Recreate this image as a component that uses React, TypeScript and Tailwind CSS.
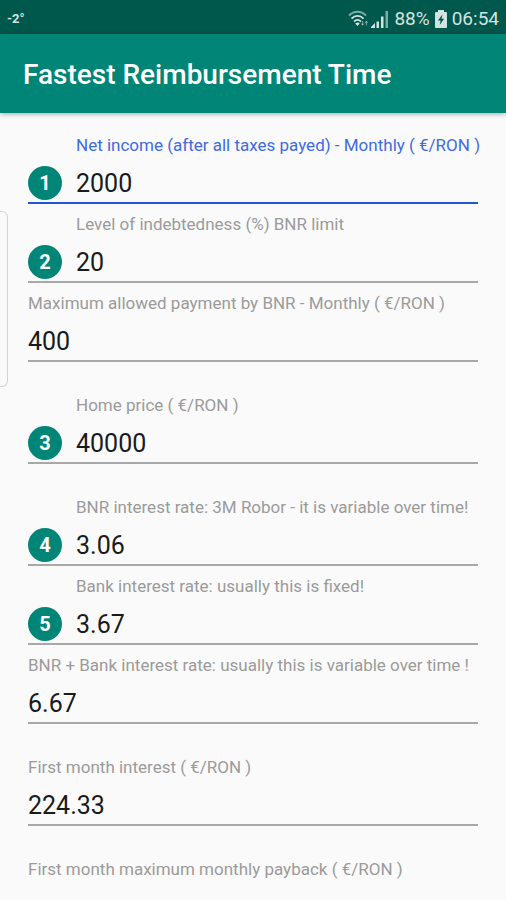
import { useState } from 'react';

interface Field {
    id: string;
    label: string;
    value: string;
    step?: number;
    computed?: boolean;
    spaced?: boolean;
}

const FIELDS: Field[] = [
    { id: 'income', label: 'Net income (after all taxes payed) - Monthly ( €/RON )', value: '2000', step: 1 },
    { id: 'debt', label: 'Level of indebtedness (%) BNR limit', value: '20', step: 2 },
    { id: 'max', label: 'Maximum allowed payment by BNR - Monthly ( €/RON )', value: '400', computed: true },
    { id: 'price', label: 'Home price ( €/RON )', value: '40000', step: 3, spaced: true },
    { id: 'robor', label: 'BNR interest rate: 3M Robor - it is variable over time!', value: '3.06', step: 4, spaced: true },
    { id: 'bank', label: 'Bank interest rate: usually this is fixed!', value: '3.67', step: 5 },
    { id: 'total', label: 'BNR + Bank interest rate: usually this is variable over time !', value: '6.67', computed: true },
    { id: 'interest', label: 'First month interest ( €/RON )', value: '224.33', computed: true, spaced: true },
    { id: 'payback', label: 'First month maximum monthly payback ( €/RON )', value: '', computed: true, spaced: true },
];

const WifiIcon = () => (
    <svg width="22" height="18" viewBox="0 0 22 18" fill="none" stroke="currentColor" strokeWidth="1.8" aria-hidden="true">
        <path d="M1 5.5C6 .5 13 .5 18 5.5" opacity=".6" />
        <path d="M3.5 8.6c3.6-3.6 8.4-3.6 12 0" />
        <path d="M6 11.6c2.2-2.2 4.8-2.2 7 0" />
        <path d="M7.2 13.6c1.4-1.4 3.2-1.4 4.6 0L9.5 16z" fill="currentColor" stroke="none" />
        <path d="M14.6 11v4m-1.2-1.3 1.2 1.5 1.2-1.5M18.4 15.5v-4m-1.2 1.3 1.2-1.5 1.2 1.5" strokeWidth="1" opacity=".6" />
    </svg>
);

const SignalIcon = () => (
    <svg width="18" height="18" viewBox="0 0 18 18" fill="currentColor" aria-hidden="true">
        <path d="M0 18v-1l4-4v5z" />
        <path d="M5.5 11.5H8V18H5.5z" />
        <path d="M10 6.5h2.5V18H10z" />
        <path d="M14.5 1H17v17h-2.5z" opacity=".6" />
    </svg>
);

const BatteryIcon = () => (
    <svg width="12" height="18" viewBox="0 0 12 18" aria-hidden="true">
        <path d="M3 0h6v2h2a1 1 0 0 1 1 1v14a1 1 0 0 1-1 1H1a1 1 0 0 1-1-1V3a1 1 0 0 1 1-1h2z" fill="currentColor" />
        <path d="M7.4 4.5 3 10.4h2.6l-.9 4.6 4.4-6.3H6.6z" fill="#00574b" />
    </svg>
);

export default function App() {
    const [values, setValues] = useState<Record<string, string>>(
        Object.fromEntries(FIELDS.map(f => [f.id, f.value]))
    );
    const [active, setActive] = useState('income');

    return (
        <div className="relative flex h-screen flex-col overflow-hidden bg-[#fafafa] font-['Roboto',sans-serif]">
            <div className="flex h-[34px] shrink-0 items-center justify-between bg-[#00574b] px-[7px] pt-1 text-[#d3e3e0]">
                <span className="text-[13px] font-bold">-2°</span>
                <div className="flex items-center gap-[5px] text-[19px] leading-5">
                    <div className="flex items-center gap-px">
                        <WifiIcon />
                        <SignalIcon />
                    </div>
                    <span>88%</span>
                    <BatteryIcon />
                    <span>06:54</span>
                </div>
            </div>

            <header className="z-10 flex h-[79px] shrink-0 items-center bg-[#008577] px-[23px] pt-[2px] shadow-[0_1px_5px_rgba(0,0,0,0.35)]">
                <h1 className="text-[28px] leading-8 font-medium whitespace-nowrap text-white">Fastest Reimbursement Time</h1>
            </header>

            <main className="min-h-0 flex-1 overflow-y-auto px-7 pt-3 [scrollbar-width:none]">
                {FIELDS.map(f => (
                    <div key={f.id} className={f.spaced ? 'mt-[23px] pt-[10px]' : 'pt-[10px]'}>
                        <label
                            htmlFor={f.id}
                            className={`block text-[17px] leading-5 whitespace-nowrap ${f.step ? 'pl-12' : ''} ${active === f.id ? 'text-[#3f6be0]' : 'text-[#9b9b9b]'}`}
                        >
                            {f.label}
                        </label>
                        <div className={`flex h-[49px] items-center border-b-2 pt-2 ${active === f.id ? 'border-[#1f55d8]' : 'border-[#a8a8a8]'}`}>
                            {f.step && (
                                <span className="mr-[14px] flex size-[34px] shrink-0 items-center justify-center rounded-full bg-[#008577] text-xl font-bold text-white">
                                    {f.step}
                                </span>
                            )}
                            <input
                                id={f.id}
                                inputMode="decimal"
                                value={values[f.id]}
                                readOnly={f.computed}
                                onFocus={() => setActive(f.id)}
                                onChange={e => setValues({ ...values, [f.id]: e.target.value })}
                                className="min-w-0 flex-1 bg-transparent pt-[2px] text-[25px] leading-8 text-[#1a1a1a] outline-none"
                            />
                        </div>
                    </div>
                ))}
            </main>

            {/* Edge panel handle */}
            <div className="absolute top-[211px] left-0 h-44 w-2 rounded-r-md border border-l-0 border-[#d4d4d4]" />
        </div>
    );
}
